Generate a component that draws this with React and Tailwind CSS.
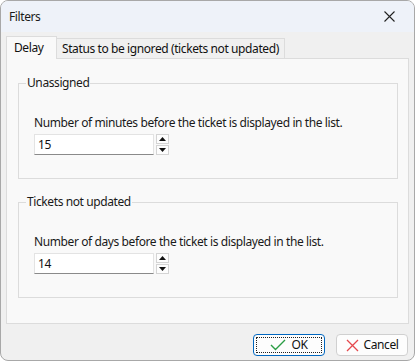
import React from "react";

const font = { fontFamily: '"Noto Sans", "Liberation Sans", sans-serif' };

function Spinner() {
  return (
    <div className="flex flex-col gap-[1px] ml-[2px]">
      <button className="w-[13px] h-[10px] border border-[#d4d4d4] bg-[#fdfdfd] flex items-center justify-center">
        <svg width="7" height="4" viewBox="0 0 7 4"><path d="M0 4 L3.5 0 L7 4 Z" fill="#111" /></svg>
      </button>
      <button className="w-[13px] h-[10px] border border-[#d4d4d4] bg-[#fdfdfd] flex items-center justify-center">
        <svg width="7" height="4" viewBox="0 0 7 4"><path d="M0 0 L3.5 4 L7 0 Z" fill="#111" /></svg>
      </button>
    </div>
  );
}

function Group({ title, label, value }) {
  return (
    <fieldset className="border border-[#dcdcdc] px-[15px] pt-[24px] pb-[23px] mx-0">
      <legend className="px-[1px] ml-[-8px] leading-[16px] h-[16px] text-[#1a1a1a]">{title}</legend>
      <p className="text-[#1a1a1a] leading-[16px]">{label}</p>
      <div className="flex items-center mt-[3px]">
        <div className="w-[120px] h-[21px] bg-white border border-[#e3e3e3] border-b-[#8a8a8a] px-[3px] flex items-center text-[#111]">{value}</div>
        <Spinner />
      </div>
    </fieldset>
  );
}

export default function App() {
  return (
    <div style={font} className="w-[415px] h-[361px] text-[12px] tracking-[-0.4px] bg-[#f0f0f0] border border-[#a8a8a8] rounded-[8px] overflow-hidden flex flex-col">
      <div className="h-[31px] bg-[#eef2f9] flex items-center justify-between pl-[8px] pr-[19px] shrink-0">
        <span className="text-[#1a1a1a]">Filters</span>
        <svg width="11" height="11" viewBox="0 0 11 11"><path d="M0.5 0.5 L10.5 10.5 M10.5 0.5 L0.5 10.5" stroke="#222" strokeWidth="1.1" /></svg>
      </div>
      <div className="flex-1 flex flex-col px-[4px] pt-[3px]">
        <div className="flex items-end h-[23px] pl-[1px]">
          <div className="h-[23px] w-[51px] bg-[#f9f9f9] border border-b-0 border-[#dcdcdc] flex items-center pl-[7px] text-[#111] relative z-10 mb-[-1px]">Delay</div>
          <div className="h-[20px] px-[5px] bg-[#f0f0f0] border border-l-0 border-b-0 border-[#dcdcdc] flex items-center text-[#111]">Status to be ignored (tickets not updated)</div>
        </div>
        <div className="w-[403px] h-[266px] bg-[#f9f9f9] border border-[#dcdcdc] ml-[1px] pl-[11px] pr-[10px] pt-[16px] flex flex-col gap-[15px]">
          <Group title="Unassigned" label="Number of minutes before the ticket is displayed in the list." value="15" />
          <Group title="Tickets not updated" label="Number of days before the ticket is displayed in the list." value="14" />
        </div>
        <div className="flex justify-end gap-[11px] pr-[2px] mt-[10px]">
          <button className="w-[72px] h-[22px] rounded-[4px] border border-[#0067c0] bg-[#fdfdfd] p-[2px]">
            <div className="w-full h-full border border-dotted border-[#222] flex items-center justify-center gap-[5px] text-[#111]">
              <svg width="16" height="12" viewBox="0 0 16 12"><path d="M1 6 L5.5 10.5 L15 1" fill="none" stroke="#2a9d45" strokeWidth="1.4" /></svg>
              OK
            </div>
          </button>
          <button className="w-[72px] h-[22px] rounded-[4px] border border-[#d0d0d0] bg-[#fdfdfd] flex items-center justify-center gap-[5px] text-[#111]">
            <svg width="13" height="13" viewBox="0 0 13 13"><path d="M1 1 L12 12 M12 1 L1 12" stroke="#e5484d" strokeWidth="1.3" /></svg>
            Cancel
          </button>
        </div>
      </div>
    </div>
  );
}
